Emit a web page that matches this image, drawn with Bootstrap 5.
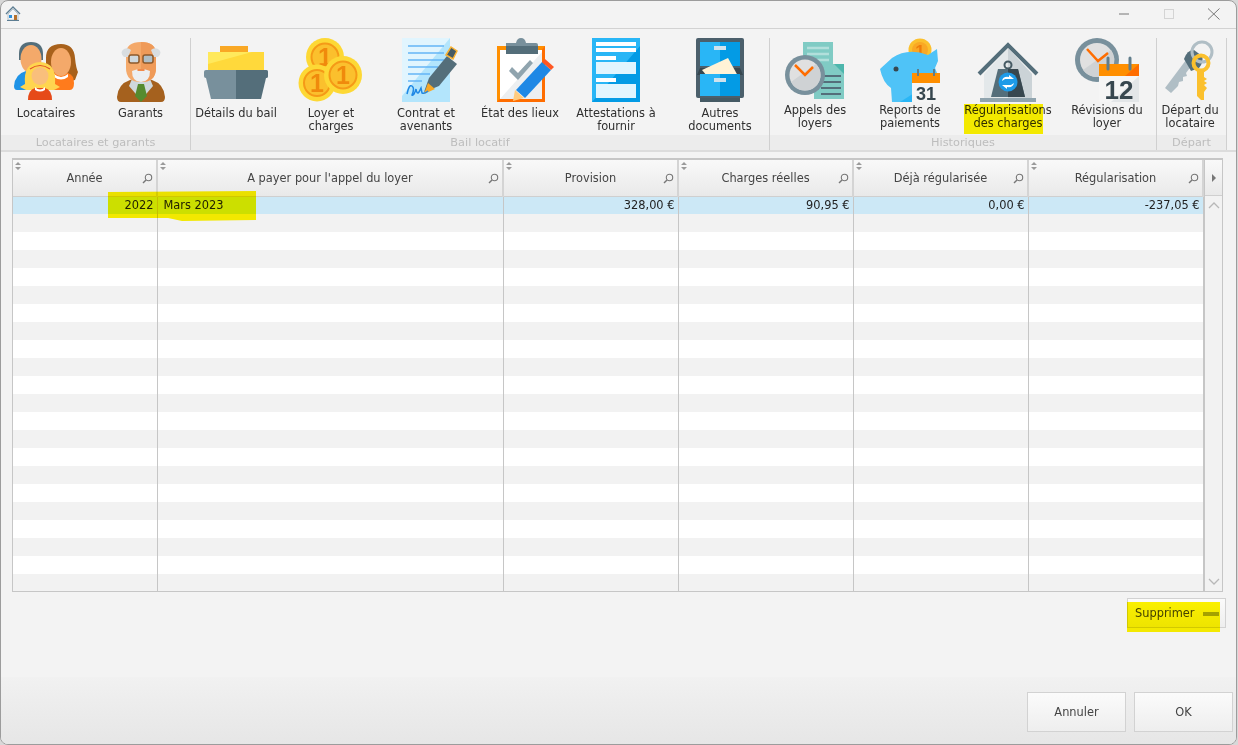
<!DOCTYPE html>
<html lang="fr">
<head>
    <meta charset="UTF-8">
    <meta name="viewport" content="width=device-width, initial-scale=1.0">
    <title>Régularisations des charges</title>
    <link href="https://cdn.jsdelivr.net/npm/bootstrap@5.3.0/dist/css/bootstrap.min.css" rel="stylesheet">
    <style>
        html, body { height: 100%; }
        body {
            background: #d8d8d8;
            overflow: hidden;
            font-family: "DejaVu Sans", Verdana, sans-serif;
            font-size: 11.4px;
            color: #333;
        }
        .app-win {
            position: relative;
            width: 1237px;
            height: 745px;
            background: #f3f3f3;
            border: 1px solid #9c9c9c;
            border-radius: 8px;
            overflow: hidden;
        }
        .title-bar { height: 27px; padding: 0 15px 2px 4px; }
        .win-btns { gap: 31px; }

        /* ribbon */
        .rib-bar { height: 124px; border-top: 1px solid #d2d2d2; border-bottom: 2px solid #dcdcdc; padding-top: 9px; }
        .rib-group { display: flex; flex-direction: column; border-right: 1px solid #d0d0d0; flex: none; }
        .rib-items { display: flex; height: 97px; }
        .rib-label { height: 15px; background: #ececec; color: #bdbdbd; text-align: center; line-height: 16px; font-size: 11.3px; }
        .rib-item { flex: none; text-align: center; line-height: 13px; color: #2f2f2f; }
        .rib-item svg { display: block; width: 64px; height: 64px; margin: 0 auto 5px; overflow: visible; }
        .grp-hist .rib-item svg { margin-bottom: 2px; }
        .grp-a { width: 190px; }
        .grp-b { width: 579px; }
        .grp-c { width: 387px; }
        .grp-d { width: 70px; }
        .it-w66 { width: 66px; }
        .it-w90 { width: 90px; }
        .it-w94 { width: 94px; }
        .it-w96 { width: 96px; }
        .it-w98 { width: 98px; }
        .it-w99 { width: 99px; }
        .it-w100 { width: 100px; }
        .it-rev { width: 100px; padding-left: 2px; }
        .it-last { width: 106px; padding-left: 8px; }

        /* grid */
        .grid-wrap { margin: 6px 0 0 11px; width: 1211px; height: 434px; border: 1px solid #c6c6c6; border-top-width: 2px; background: #fff; overflow: hidden; }
        .grid-tbl { table-layout: fixed; width: 1190px; border-collapse: collapse; margin: 0; }
        .grid-tbl th {
            position: relative;
            height: 36px;
            padding: 2px 0 0;
            font-weight: normal;
            text-align: center;
            color: #444;
            background: linear-gradient(#f9f9f9, #e9e9e9);
            border-right: 2px solid #d4d4d4;
            border-bottom: 1px solid #cfcfcf;
        }
        .grid-tbl td {
            height: 18px;
            padding: 0 3px 0 6px;
            line-height: 17px;
            color: #222;
            text-align: right;
            border-right: 1px solid #c6c6c6;
        }
        .grid-tbl tbody tr:nth-child(even) td { background: #f2f2f2; }
        .grid-tbl tbody tr.row-sel td { background: #cce8f6; }
        .grid-tbl td.txt-left { text-align: left; }
        .col-an { width: 144px; }
        .col-ap { width: 346px; }
        .col-pr { width: 175px; }
        .sort-mark { position: absolute; left: 2px; top: 2px; }
        .find-mark { position: absolute; right: 3px; top: 13px; }
        .grid-side { width: 19px; flex: none; border-left: 1px solid #c6c6c6; background: #f2f2f2; }
        .side-head { height: 36px; background: linear-gradient(#f9f9f9, #e9e9e9); border-bottom: 1px solid #cfcfcf; }
        .side-body { height: 395px; padding: 6px 0; }

        /* buttons */
        .btn-win {
            background: linear-gradient(#fbfbfb, #eeeeee);
            border: 1px solid #d2d2d2;
            border-radius: 0;
            font-size: 11.4px;
            color: #444;
            padding: 2px 0 0;
        }
        .btn-win:hover { background: #eee; color: #444; border-color: #d2d2d2; }
        .btn-del { width: 99px; height: 30px; margin: 6px 10px 0 0; padding-left: 7px; text-align: left; }
        .btn-foot { width: 99px; height: 40px; }
        .foot-bar { height: 67px; margin-top: 49px; padding: 15px 3px 0 0; gap: 8px; background: linear-gradient(#f1f1f1, #e6e6e6); }

        /* marker strokes over the screenshot */
        .hl-mark { position: absolute; left: 0; top: 0; width: 1237px; height: 745px; mix-blend-mode: multiply; pointer-events: none; }
    </style>
</head>
<body>
<div class="app-win d-flex flex-column">

    <!-- title bar -->
    <div class="title-bar d-flex align-items-center justify-content-between">
        <svg width="16" height="16" viewBox="0 0 16 16">
            <path d="M1 8 8 1l7 7" fill="none" stroke="#5d7d92" stroke-width="1.4"/>
            <path d="M3 8l5-5 5 5v6H3z" fill="#f1f4f6" stroke="#8fa4b2" stroke-width=".6"/>
            <rect x="4" y="9" width="3" height="3" fill="#2f8fd8"/>
            <rect x="9" y="9" width="3" height="5" fill="#b5712c"/>
            <rect x="2" y="14" width="12" height="1" fill="#5d7d92"/>
        </svg>
        <div class="win-btns d-flex align-items-center">
            <svg width="14" height="14" viewBox="0 0 14 14"><path d="M2 7h10" stroke="#777" stroke-width="1"/></svg>
            <svg width="14" height="14" viewBox="0 0 14 14"><rect x="2.5" y="2.5" width="9" height="9" fill="none" stroke="#d4d4d4"/></svg>
            <svg width="14" height="14" viewBox="0 0 14 14"><path d="M1 1.5l11.5 11M12.5 1.5L1 12.5" stroke="#777" stroke-width="1"/></svg>
        </div>
    </div>

    <!-- ribbon -->
    <div class="rib-bar d-flex">
        <div class="rib-group grp-a">
            <div class="rib-items">
                <div class="rib-item it-w90">
                    <svg viewBox="0 0 64 64">
                        <path d="M0 48q1-12 12-15h9l8 6v13H3q-3 0-3-4z" fill="#1f93e6"/>
                        <path d="M5 16Q5 4 17 4t12 12v6H5z" fill="#546e7a"/>
                        <ellipse cx="17" cy="21" rx="10.5" ry="14" fill="#f4a96a"/>
                        <path d="M32 20Q32 6 47 6q13 0 14 14 1 10 3 14l-3 8-12 3-17-10z" fill="#a8611b"/>
                        <path d="M32 48q1-11 8-13h14q6 2 6 10 0 7-4 7H32z" fill="#ff7b1c"/>
                        <ellipse cx="47" cy="24" rx="10" ry="14" fill="#f4a96a"/>
                        <path d="M40 36q7 6 14 0v3q-7 5-14 0z" fill="#fff"/>
                        <path d="M11 46Q9 25 26 24q17 1 15 22l5 3-6 3H12l-6-3z" fill="#ffd54f"/>
                        <path d="M16 31q10-7 20 0" fill="none" stroke="#e2502a" stroke-width="1.2"/>
                        <ellipse cx="26" cy="38" rx="8.5" ry="9" fill="#f9bf7c"/>
                        <path d="M14 62q0-10 7-12h10q7 2 7 12z" fill="#e64a19"/>
                        <path d="M21 49q5 5 10 0v3q-5 3-10 0z" fill="#fff"/>
                    </svg>
                    Locataires
                </div>
                <div class="rib-item it-w99">
                    <svg viewBox="0 0 64 64">
                        <path d="M12 64q-4 0-4-5 1-13 13-17l11-4 11 4q12 4 13 17 0 5-4 5z" fill="#a5611e"/>
                        <path d="M32 38l9 3 3 7-12 14-12-14 3-7z" fill="#cfd8dc"/>
                        <path d="M29 46h6l3 12-6 6-6-6z" fill="#558b2f"/>
                        <path d="M17 16Q17 4 32 4t15 12v14q0 14-15 14T17 30z" fill="#f4a96a"/>
                        <path d="M32 4q15 0 15 12v14q0 14-15 14z" fill="#ef9a58"/>
                        <path d="M15 19q-5-5 0-8 4-2 7 1l-3 7zM49 19q5-5 0-8-4-2-7 1l3 7z" fill="#d8dde0"/>
                        <rect x="20" y="17" width="10" height="8" rx="2" fill="#cfd8dc" stroke="#8d5a2b" stroke-width="1.5"/>
                        <rect x="34" y="17" width="10" height="8" rx="2" fill="#b0bec5" stroke="#8d5a2b" stroke-width="1.5"/>
                        <path d="M23 33q9-4 18 0 0 11-9 11T23 33z" fill="#eceff1"/>
                        <rect x="28.500" y="31" width="7" height="2" fill="#f08a4b"/>
                    </svg>
                    Garants
                </div>
            </div>
            <div class="rib-label">Locataires et garants</div>
        </div>

        <div class="rib-group grp-b">
            <div class="rib-items">
                <div class="rib-item it-w90">
                    <svg viewBox="0 0 64 64">
                        <path d="M16 8h28v6H16z" fill="#f9a825"/>
                        <path d="M4 32V14h56v18z" fill="#ffd93b"/>
                        <path d="M4 32V14h44L4 26z" fill="#ffe95c"/>
                        <rect x="0" y="32" width="64" height="8" rx="2" fill="#78909c"/>
                        <path d="M32 32h30q2 0 2 2v4q0 2-2 2H32z" fill="#546e7a"/>
                        <path d="M2 40h30v21H7z" fill="#78909c"/>
                        <path d="M32 40h30l-5 21H32z" fill="#546e7a"/>
                    </svg>
                    Détails du bail
                </div>
                <div class="rib-item it-w100">
                    <svg viewBox="0 0 64 64">
                        <g font-family="Liberation Sans, sans-serif" font-weight="bold" font-size="25" text-anchor="middle" fill="#f08a0c">
                            <circle cx="26" cy="19" r="19" fill="#fdd835"/><circle cx="26" cy="19" r="13.5" fill="#fbc02d" stroke="#f59a17" stroke-width="2"/><text x="26" y="28">1</text>
                            <circle cx="18" cy="45" r="18.5" fill="#fdd835"/><circle cx="18" cy="45" r="13" fill="#fbc02d" stroke="#f59a17" stroke-width="2"/><text x="18" y="54">1</text>
                            <circle cx="44" cy="37" r="19" fill="#fdd835"/><circle cx="44" cy="37" r="13.5" fill="#fbc02d" stroke="#f59a17" stroke-width="2"/><text x="44" y="46">1</text>
                        </g>
                    </svg>
                    Loyer et<br>charges
                </div>
                <div class="rib-item it-w90">
                    <svg viewBox="0 0 64 64">
                        <rect x="8" y="0" width="48" height="64" fill="#b3e5fc"/>
                        <path d="M8 0h48L8 58z" fill="#e1f5fe"/>
                        <path d="M14 8h36M14 15h36M14 22h36M14 29h30M14 36h22M14 43h14" stroke="#64b5f6" stroke-width="1.5"/>
                        <path d="M30 54l5-14 18-22 10 8-18 22z" fill="#546e7a"/>
                        <path d="M30 56l4-11 7 6z" fill="#f9a825"/>
                        <path d="M52 17l5-8 6 4-4 8z" fill="#455a64" stroke="#f9b233" stroke-width="1.5"/>
                        <path d="M13 56q2-10 5-8t0 9q2 1 4-6 1 6 3 3l2-4 1 5q3 1 6-2" fill="none" stroke="#1e88e5" stroke-width="1.5"/>
                    </svg>
                    Contrat et<br>avenants
                </div>
                <div class="rib-item it-w98">
                    <svg viewBox="0 0 64 64">
                        <rect x="9" y="8" width="48" height="56" fill="#ff8f00"/>
                        <path d="M57 8v56H9z" fill="#ff6d00"/>
                        <rect x="12" y="12" width="42" height="49" fill="#fff"/>
                        <path d="M54 14v47H12z" fill="#eceff1"/>
                        <path d="M18 5h10q1-5 5-5t5 5h10q2 0 2 2v9H18z" fill="#78909c"/>
                        <rect x="18" y="8" width="32" height="8" fill="#546e7a"/>
                        <path d="M24 29l6 6 12-13 3 3-15 17-9-9z" fill="#90a4ae"/>
                        <path d="M28 52l26-28 9 8-26 28z" fill="#1e88e5"/>
                        <path d="M54 24l3-3 9 8-3 3z" fill="#ff5722"/>
                        <path d="M27 52l9 8-11 3z" fill="#ffcc80"/>
                    </svg>
                    État des lieux
                </div>
                <div class="rib-item it-w94">
                    <svg viewBox="0 0 64 64">
                        <rect x="8" y="0" width="48" height="64" fill="#039be5"/>
                        <path d="M8 0h48v8L8 64z" fill="#29b6f6"/>
                        <path d="M12 4h40v4H12zM12 10h40v4H12zM12 18h20v4H12z" fill="#fff"/>
                        <rect x="12" y="24" width="40" height="12" fill="#e1f5fe"/>
                        <rect x="12" y="40" width="20" height="4" fill="#fff"/>
                        <rect x="12" y="46" width="40" height="14" fill="#e1f5fe"/>
                    </svg>
                    Attestations à<br>fournir
                </div>
                <div class="rib-item it-last">
                    <svg viewBox="0 0 64 64">
                        <rect x="12" y="60" width="40" height="4" fill="#455a64"/>
                        <rect x="8" y="0" width="48" height="60" rx="2" fill="#4b5f6b"/>
                        <rect x="12" y="4" width="40" height="24" fill="#29b6f6"/>
                        <rect x="32" y="4" width="20" height="24" fill="#039be5"/>
                        <rect x="26" y="8" width="12" height="4" fill="#cfe3ee"/>
                        <path d="M12 30h40l3 7H9z" fill="#37474f"/>
                        <path d="M14 32l26-12 10 18-26 6z" fill="#fff3d6"/>
                        <rect x="12" y="36" width="40" height="22" fill="#29b6f6"/>
                        <rect x="32" y="36" width="20" height="22" fill="#039be5"/>
                        <rect x="26" y="40" width="12" height="4" fill="#cfe3ee"/>
                    </svg>
                    Autres<br>documents
                </div>
            </div>
            <div class="rib-label">Bail locatif</div>
        </div>

        <div class="rib-group grp-c grp-hist">
            <div class="rib-items">
                <div class="rib-item it-w90">
                    <svg viewBox="0 0 64 64">
                        <rect x="20" y="4" width="30" height="36" fill="#80cbc4"/>
                        <path d="M24 10h22M24 16h22M24 22h22M24 28h22" stroke="#b2dfdb" stroke-width="2.5"/>
                        <rect x="31" y="26" width="30" height="35" fill="#80cbc4"/>
                        <path d="M61 26v10l-10-10z" fill="#4db6ac"/>
                        <path d="M38 38h20M38 44h20M38 50h20M38 56h20" stroke="#546e7a" stroke-width="2"/>
                        <circle cx="22" cy="37" r="20" fill="#78909c"/>
                        <circle cx="22" cy="37" r="15.5" fill="#e0e0e0"/>
                        <path d="M8 44 33 26a15.5 15.5 0 0 1-11 26.500 15.5 15.500 0 0 1-14-8.500z" fill="#cfd2d4"/>
                        <path d="M12 27l10 10 8-8" fill="none" stroke="#ff6d00" stroke-width="2.5"/>
                    </svg>
                    Appels des<br>loyers
                </div>
                <div class="rib-item it-w100">
                    <svg viewBox="0 0 64 64">
                        <circle cx="42" cy="12" r="11.5" fill="#fbc02d"/>
                        <circle cx="42" cy="12" r="8" fill="#f9a825"/>
                        <text x="42" y="19" font-family="Liberation Sans, sans-serif" font-weight="bold" font-size="17" text-anchor="middle" fill="#ef7d0a">1</text>
                        <path d="M2 31 14 20Q30 9 50 17l9-6 1 12-3 7 4 10v24H14l-1-14Q5 45 2 31z" fill="#4fc3f7"/>
                        <path d="M60 40v24H22z" fill="#29b6f6"/>
                        <circle cx="18" cy="31" r="2.5" fill="#37474f"/>
                        <rect x="34" y="35" width="28" height="29" fill="#f5f5f5"/>
                        <rect x="34" y="35" width="28" height="10" fill="#ff8f00"/>
                        <path d="M40 31v7M56 31v7" stroke="#607d8b" stroke-width="2"/>
                        <text x="48" y="62" font-family="Liberation Sans, sans-serif" font-weight="bold" font-size="18" text-anchor="middle" fill="#37474f">31</text>
                    </svg>
                    Reports de<br>paiements
                </div>
                <div class="rib-item it-w96">
                    <svg viewBox="0 0 64 64">
                        <path d="M8 36 32 10l24 26v25H8z" fill="#e3e8ea"/>
                        <path d="M32 10l24 26v25H32z" fill="#cbd3d7"/>
                        <path d="M3 36 32 7l29 29" fill="none" stroke="#546e7a" stroke-width="4"/>
                        <rect x="4" y="60" width="56" height="4" fill="#90a4ae"/>
                        <circle cx="32" cy="27" r="3.5" fill="none" stroke="#455a64" stroke-width="2"/>
                        <path d="M22 31h20l7 28H15z" fill="#546e7a"/>
                        <path d="M32 31h10l7 28H32z" fill="#37474f"/>
                        <circle cx="32" cy="44" r="9.500" fill="#1e9be8"/>
                        <path d="M26 43q1-5 7-4v-2l5 4h-9zM38 45q-1 5-7 4v2l-5-4h9z" fill="#fff"/>
                    </svg>
                    Régularisations<br>des charges
                </div>
                <div class="rib-item it-rev">
                    <svg viewBox="0 0 64 64">
                        <circle cx="22" cy="22" r="22" fill="#78909c"/>
                        <circle cx="22" cy="22" r="17" fill="#e0e0e0"/>
                        <path d="M8 32 36 12a17 17 0 0 1-14 27 17 17 0 0 1-14-7z" fill="#cfd2d4"/>
                        <path d="M12 11l11 12 10-8" fill="none" stroke="#ff6d00" stroke-width="2.5"/>
                        <rect x="24" y="26" width="40" height="38" fill="#f5f5f5"/>
                        <path d="M64 38v26H36z" fill="#e3e6e8"/>
                        <rect x="24" y="26" width="40" height="12" fill="#ff8f00"/>
                        <path d="M64 26v12H50z" fill="#ff6d00"/>
                        <path d="M33 20v11M55 20v11" stroke="#607d8b" stroke-width="3" stroke-linecap="round"/>
                        <text x="44" y="61" font-family="Liberation Sans, sans-serif" font-weight="bold" font-size="26" text-anchor="middle" fill="#37474f">12</text>
                    </svg>
                    Révisions du<br>loyer
                </div>
            </div>
            <div class="rib-label">Historiques</div>
        </div>

        <div class="rib-group grp-d grp-hist">
            <div class="rib-items">
                <div class="rib-item it-w66">
                    <svg viewBox="0 0 64 64">
                        <path d="M7 50 28 22l6 5-6 8 1 3-4 1 0 4-4 1-1 4-7 7z" fill="#b0bec5"/>
                        <path d="M26 21q3-9 10-9l8 6q2 6-3 12l-8 3z" fill="#546e7a"/>
                        <circle cx="44" cy="14" r="10" fill="none" stroke="#b0bec5" stroke-width="3"/>
                        <circle cx="43" cy="25" r="7.5" fill="none" stroke="#fbc02d" stroke-width="4"/>
                        <path d="M39 32h7v7l3 2-3 2 3 2-3 2 3 3-3 4v8h-3l-4-4z" fill="#fbc02d"/>
                    </svg>
                    Départ du<br>locataire
                </div>
            </div>
            <div class="rib-label">Départ</div>
        </div>
    </div>

    <!-- grid -->
    <div class="grid-wrap d-flex">
        <table class="grid-tbl">
            <colgroup>
                <col class="col-an"><col class="col-ap"><col class="col-pr"><col class="col-pr"><col class="col-pr"><col class="col-pr">
            </colgroup>
            <thead>
                <tr id="headRow">
                    <th>Année</th>
                    <th>A payer pour l'appel du loyer</th>
                    <th>Provision</th>
                    <th>Charges réelles</th>
                    <th>Déjà régularisée</th>
                    <th>Régularisation</th>
                </tr>
            </thead>
            <tbody id="gridBody">
                <tr class="row-sel">
                    <td>2022</td>
                    <td class="txt-left">Mars 2023</td>
                    <td>328,00 €</td>
                    <td>90,95 €</td>
                    <td>0,00 €</td>
                    <td>-237,05 €</td>
                </tr>
            </tbody>
        </table>
        <div class="grid-side">
            <div class="side-head d-flex align-items-center justify-content-center">
                <svg width="6" height="8" viewBox="0 0 6 8"><path d="M1 0l4 4-4 4z" fill="#777"/></svg>
            </div>
            <div class="side-body d-flex flex-column align-items-center justify-content-between">
                <svg width="12" height="7" viewBox="0 0 12 7"><path d="M1 6l5-5 5 5" fill="none" stroke="#b8b8b8" stroke-width="1.3"/></svg>
                <svg width="12" height="7" viewBox="0 0 12 7"><path d="M1 1l5 5 5-5" fill="none" stroke="#b8b8b8" stroke-width="1.3"/></svg>
            </div>
        </div>
    </div>

    <div class="d-flex justify-content-end">
        <button type="button" class="btn btn-win btn-del">Supprimer</button>
    </div>

    <div class="foot-bar d-flex justify-content-end">
        <button type="button" class="btn btn-win btn-foot">Annuler</button>
        <button type="button" class="btn btn-win btn-foot">OK</button>
    </div>

    <!-- yellow marker strokes -->
    <svg class="hl-mark" viewBox="0 0 1237 745">
        <rect x="963" y="103" width="79" height="30" fill="#fff500"/>
        <path d="M107 191l148-1 0 29-74 1-14-3-60 0z" fill="#fff500"/>
        <path d="M1126 601h93v30h-93z" fill="#fff500"/>
        <rect x="1202" y="611" width="16" height="4" fill="#aca800"/>
    </svg>
</div>

<script>
    // empty rows of the grid and header decorations
    const gridBody = document.getElementById('gridBody');
    for (let i = 0; i < 21; i++) {
        const tr = document.createElement('tr');
        tr.innerHTML = '<td></td><td></td><td></td><td></td><td></td><td></td>';
        gridBody.appendChild(tr);
    }
    document.querySelectorAll('#headRow th').forEach(th => {
        th.insertAdjacentHTML('beforeend',
            '<svg class="sort-mark" width="6" height="8" viewBox="0 0 6 8"><path d="M3 0l3 3H0zM3 8L0 5h6z" fill="#9a9a9a"/></svg>' +
            '<svg class="find-mark" width="11" height="11" viewBox="0 0 11 11"><circle cx="6.5" cy="4.5" r="3.2" fill="none" stroke="#777" stroke-width="1.1"/><path d="M4 7L1 10" stroke="#777" stroke-width="1.4"/></svg>');
    });
</script>
<script src="https://cdn.jsdelivr.net/npm/bootstrap@5.3.0/dist/js/bootstrap.bundle.min.js"></script>
</body>
</html>
